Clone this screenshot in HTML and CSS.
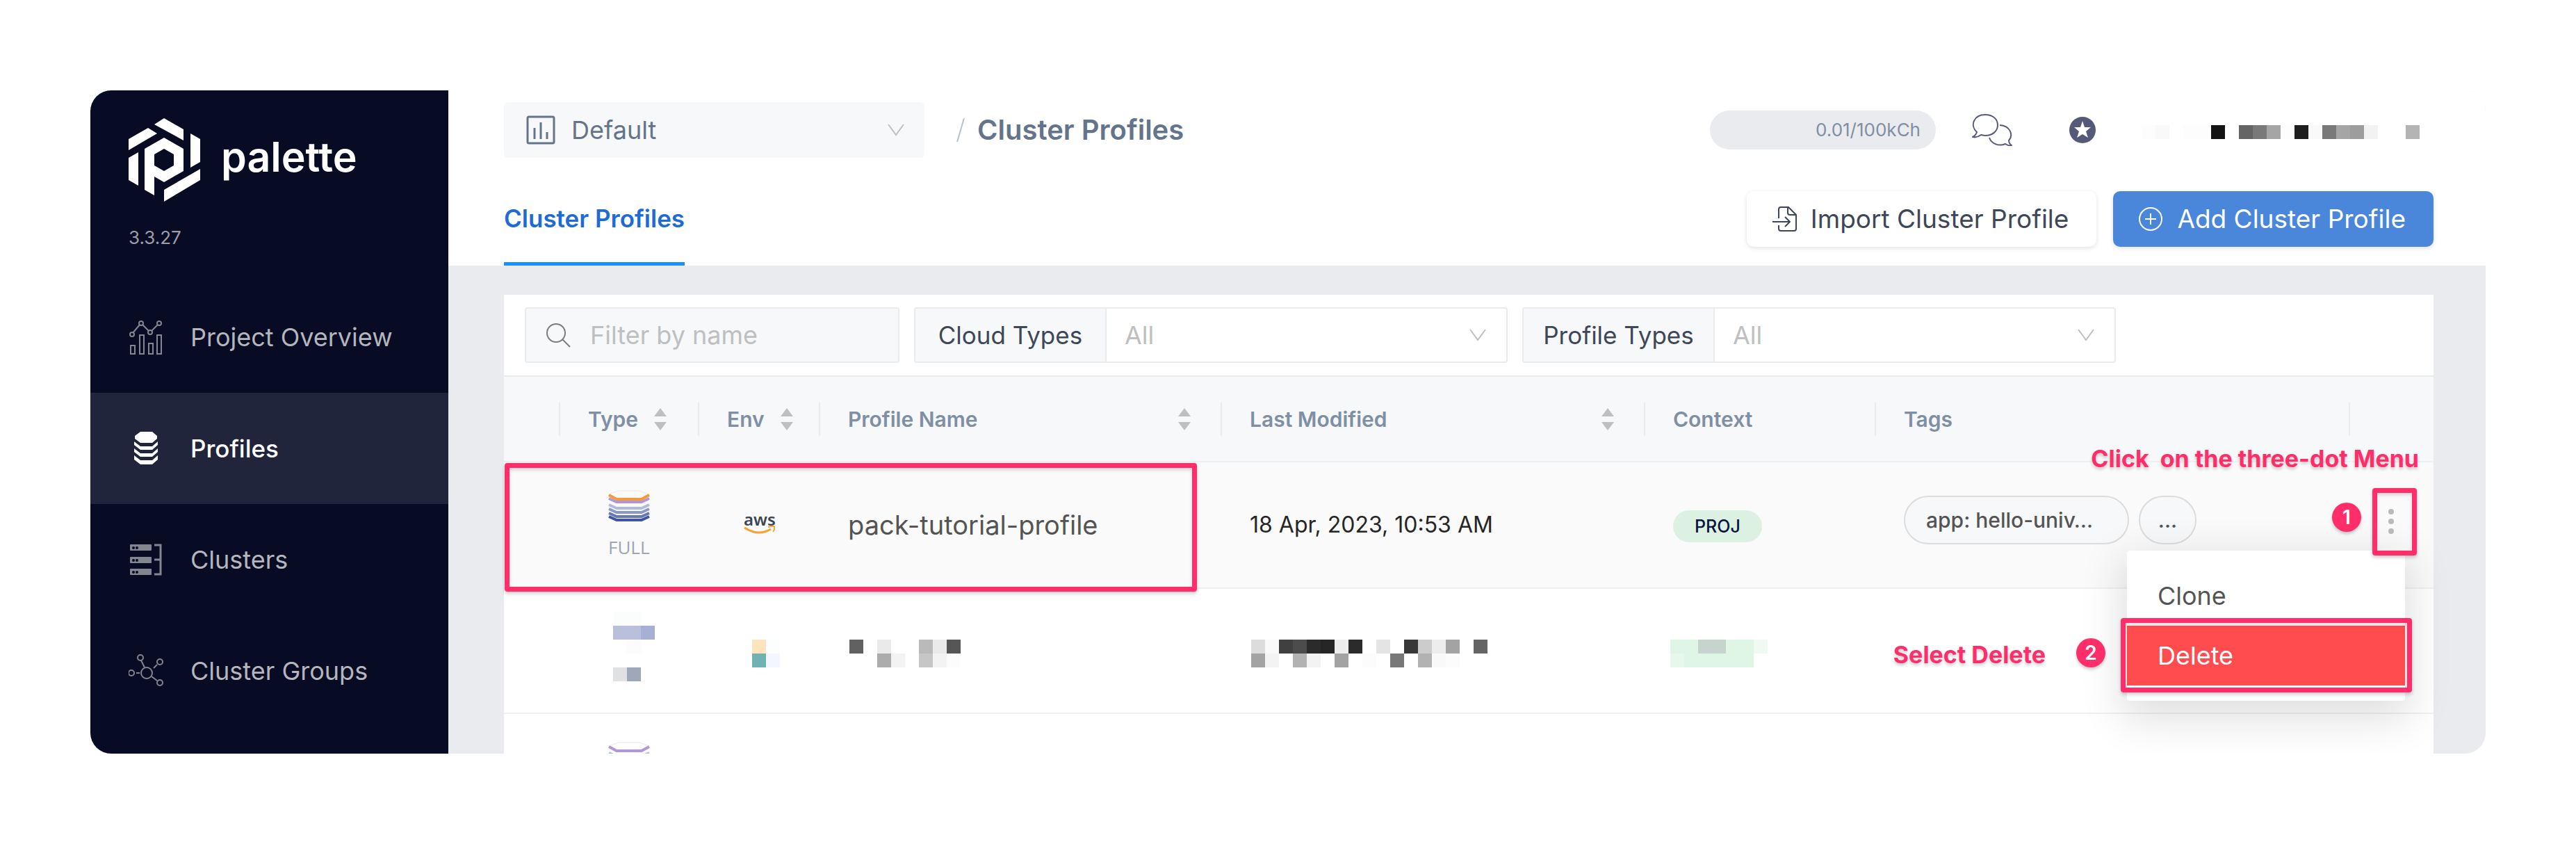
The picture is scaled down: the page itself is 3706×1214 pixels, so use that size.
FILE: index.html
```html
<!DOCTYPE html>
<html lang="en">
<head>
<meta charset="utf-8">
<title>Palette - Cluster Profiles</title>
<link rel="stylesheet" href="styles.css">
</head>
<body>
<svg class="defs" aria-hidden="true">
  <symbol id="chevron" viewBox="0 0 26 20"><path d="M2 2l11 15L24 2" fill="none" stroke="currentColor" stroke-width="2"/></symbol>
  <symbol id="sorter" viewBox="0 0 20 32"><path d="M10 0l9 12H1zM10 32l9-12H1z" fill="#bfbfbf"/></symbol>
</svg>
<div class="app">
  <aside class="sidebar">
    <a class="brand" href="#">
      <svg class="brand-mark" viewBox="0 0 103 120" fill="#fff" aria-hidden="true">
        <path d="M37 9L51 0l28 16v16zM0 30l28-16 13 8L0 46zM0 57l14-8v48L0 89zM89 22l14 8v33l-14 8zM51 103l52-30v16l-52 31z"/>
        <path fill-rule="evenodd" d="M23 44l28-16 28 16v32L51 92 37 84v27l-14-8zM37 52v16l14 8 14-8V52l-14-8z"/>
      </svg>
      <span>palette</span>
    </a>
    <div class="version">3.3.27</div>
    <nav class="nav">
      <a href="#"><svg viewBox="0 0 50 50" fill="none" stroke="currentColor" stroke-width="2"><path d="M3 37h6v12H3zM16 22h6v27h-6zM29 34h6v15h-6zM41 22h6v27h-6zM6 19L16 7M20 7l9 9M33 16l9-9"/><circle cx="5" cy="21" r="3"/><circle cx="18" cy="5" r="3"/><circle cx="31" cy="18" r="3"/><circle cx="44" cy="5" r="3"/></svg>Project Overview</a>
      <a class="active" href="#" aria-current="page"><svg viewBox="0 0 50 50" fill="currentColor"><path d="M17 1h17l7 6v4l-7 6H17l-8-6V7zM8 15l9 7h17l8-7v5l-8 7H17l-9-7zM8 25l9 7h17l8-7v5l-8 7H17l-9-7zM8 35l9 7h17l8-7v6l-8 7H17l-9-7z"/></svg>Profiles</a>
      <a href="#"><svg viewBox="0 0 50 50"><g fill="currentColor"><rect x="2" y="3" width="31" height="9" rx="1"/><rect x="2" y="21" width="31" height="9" rx="1"/><rect x="2" y="38" width="31" height="9" rx="1"/></g><path d="M37 4h9v42h-9M37 25h9" fill="none" stroke="currentColor" stroke-width="3"/><g fill="#070b24"><circle cx="7" cy="8" r="2"/><circle cx="12" cy="8" r="2"/><circle cx="7" cy="26" r="2"/><circle cx="12" cy="26" r="2"/><circle cx="7" cy="43" r="2"/><circle cx="12" cy="43" r="2"/></g></svg>Clusters</a>
      <a href="#"><svg viewBox="0 0 50 50" fill="none" stroke="currentColor" stroke-width="2"><circle cx="26" cy="28" r="8"/><circle cx="17" cy="6" r="4"/><circle cx="45" cy="12" r="4"/><circle cx="4" cy="28" r="4"/><circle cx="45" cy="42" r="4"/><path d="M18 10l5 10M33 33l8 6M36 21l5-5M11 28h5"/></svg>Cluster Groups</a>
    </nav>
  </aside>

  <main class="main">
    <header class="header">
      <div class="topbar">
        <label class="project">
          <svg viewBox="0 0 42 42" fill="none" stroke="currentColor"><rect x="2" y="2" width="38" height="38" rx="2" stroke-width="3"/><path d="M12 18v16M21 10v24M30 24v10" stroke-width="3"/></svg>
          <select aria-label="Project"><option>Default</option></select>
          <svg class="chevron"><use href="#chevron"/></svg>
        </label>
        <svg class="slash" viewBox="0 0 12 34"><path d="M11 0L1 34" stroke="#b8c0cc" stroke-width="2"/></svg>
        <h1>Cluster Profiles</h1>
        <div class="usage">0.01/100kCh</div>
        <svg class="chat" viewBox="0 0 58 46" fill="none" stroke="#555a7b" stroke-width="2" stroke-linejoin="round"><path d="M7 26C-3 17 2 1 19 1c13 0 18 8 18 15 0 9-8 15-18 15-3 0-5-1-6-1-4 3-8 4-12 3 4-2 5-4 6-7z"/><path d="M40 16c15 1 20 14 13 22 0 3 1 5 4 7-3 1-6 0-9-2-9 4-20 0-23-9"/></svg>
        <svg class="star" viewBox="0 0 38 38"><circle cx="19" cy="19" r="19" fill="#555a7b"/><path d="M19 6l3 9h9l-7 6 3 9-8-5-8 5 3-9-7-6h9z" fill="#fff"/></svg>
        <svg class="account" viewBox="0 0 420 20" shape-rendering="crispEdges" aria-label="Account"><path fill="#fdfdfd" d="M0 0h20v20H0zM60 0h40v20H60zM200 0h20v20h-20z"/><path fill="#f9f9f9" d="M20 0h20v20H20zM240 0h20v20h-20z"/><path fill="#141414" d="M100 0h20v20h-20z"/><path fill="#656565" d="M140 0h20v20h-20z"/><path fill="#797979" d="M160 0h20v20h-20zM260 0h20v20h-20z"/><path fill="#a5a5a5" d="M180 0h20v20h-20zM280 0h20v20h-20z"/><path fill="#1e1e1e" d="M220 0h20v20h-20z"/><path fill="#9d9d9d" d="M300 0h20v20h-20z"/><path fill="#f2f2f2" d="M320 0h20v20h-20z"/><path fill="#b4b4b4" d="M380 0h20v20h-20z"/></svg>
      </div>
      <div class="tabbar">
        <a class="tab" href="#">Cluster Profiles</a>
        <div class="actions">
          <button class="btn" type="button"><svg viewBox="0 0 36 36" fill="none" stroke="currentColor" stroke-width="2" stroke-linejoin="round"><path d="M10 17V4q0-3 3-3h11l11 11v20q0 3-3 3H13q-3 0-3-3v-5M23 1v8q0 3 3 3h9M1 22h25M19 15l7 7-7 7"/></svg>Import Cluster Profile</button>
          <button class="btn primary" type="button"><svg viewBox="0 0 36 36" fill="none" stroke="currentColor" stroke-width="2"><circle cx="18" cy="18" r="16"/><path d="M18 10v16M10 18h16"/></svg>Add Cluster Profile</button>
        </div>
      </div>
    </header>

    <section class="panel">
      <form class="filters">
        <label class="search">
          <svg viewBox="0 0 36 36" fill="none" stroke="#7c7c7c" stroke-width="2"><circle cx="15" cy="15" r="13"/><path d="M24 24l11 11"/></svg>
          <input type="text" aria-label="Filter by name" placeholder="Filter by name">
        </label>
        <label class="filter"><span>Cloud Types</span><select><option>All</option></select><svg class="chevron"><use href="#chevron"/></svg></label>
        <label class="filter"><span>Profile Types</span><select><option>All</option></select><svg class="chevron"><use href="#chevron"/></svg></label>
      </form>

      <table>
        <colgroup><col class="c-pad"><col class="c-type"><col class="c-env"><col class="c-name"><col class="c-date"><col class="c-context"><col><col class="c-menu"></colgroup>
        <thead>
          <tr>
            <th></th>
            <th><div>Type<svg class="sorter"><use href="#sorter"/></svg></div></th>
            <th><div>Env<svg class="sorter"><use href="#sorter"/></svg></div></th>
            <th class="wide"><div>Profile Name<svg class="sorter"><use href="#sorter"/></svg></div></th>
            <th class="wide"><div>Last Modified<svg class="sorter"><use href="#sorter"/></svg></div></th>
            <th><div>Context</div></th>
            <th><div>Tags</div></th>
            <th></th>
          </tr>
        </thead>
        <tbody>
          <tr class="hovered">
            <td></td>
            <td class="type">
              <svg viewBox="0 0 60 46"><path d="M1 6L15 1h30l14 5" fill="none" stroke="#e8e8e8"/><g fill="none" stroke-width="4"><path stroke="#b296dc" d="M1 12l11 5h36l11-5"/><path stroke="#f5993f" d="M1 7l11 6h36l11-6"/><path stroke="#b3bbdc" d="M1 21l11 5h36l11-5"/><path stroke="#8b99c9" d="M1 27l11 5h36l11-5"/><path stroke="#6577b4" d="M1 33l11 5h36l11-5"/><path stroke="#4054a0" d="M1 38l11 5h36l11-5"/></g></svg>
              FULL
            </td>
            <td><svg class="aws" viewBox="0 0 48 34"><text x="1" y="18">aws</text><path d="M2 21q20 13 38 2" fill="none" stroke="#f9a234" stroke-width="3"/><path d="M36 20q10-2 9 0 1 3-2 7" fill="none" stroke="#f9a234" stroke-width="2"/></svg></td>
            <td class="name">pack-tutorial-profile</td>
            <td class="date">18 Apr, 2023, 10:53 AM</td>
            <td><span class="badge">PROJ</span></td>
            <td><div class="tags"><span class="tag">app: hello-univ…</span><span class="tag">...</span></div></td>
            <td><button class="dots" type="button" aria-label="Row menu"><svg viewBox="0 0 10 38" fill="#bbb"><circle cx="5" cy="5" r="4"/><circle cx="5" cy="19" r="4"/><circle cx="5" cy="33" r="4"/></svg></button></td>
          </tr>
          <tr class="redacted">
            <td></td>
            <td class="r-type"><svg width="60" height="120" viewBox="0 0 60 120" shape-rendering="crispEdges"><path fill="#fbfdfc" d="M0 0h40v20H0z"/><path fill="#b9c0dc" d="M0 20h40v20H0z"/><path fill="#a6b0d4" d="M40 20h20v20H40z"/><path fill="#fcfcfc" d="M20 40h20v20H20z"/><path fill="#e0e1e3" d="M0 80h20v20H0z"/><path fill="#9fa8b8" d="M20 80h20v20H20z"/></svg></td>
            <td class="r-env"><svg width="40" height="40" viewBox="0 0 40 40" shape-rendering="crispEdges"><path fill="#fde4bc" d="M0 0h20v20H0z"/><path fill="#fcfdff" d="M20 0h20v20H20z"/><path fill="#70b2b2" d="M0 20h20v20H0z"/><path fill="#f3f6fe" d="M20 20h20v20H20z"/></svg></td>
            <td><svg width="160" height="40" viewBox="0 0 160 40" shape-rendering="crispEdges"><path fill="#616161" d="M0 0h20v20H0z"/><path fill="#eaeaea" d="M40 0h20v20H40zM120 0h20v20h-20z"/><path fill="#bababa" d="M100 0h20v20h-20z"/><path fill="#565656" d="M140 0h20v20h-20z"/><path fill="#acacac" d="M40 20h20v20H40z"/><path fill="#f3f3f3" d="M60 20h20v20H60zM120 20h20v20h-20z"/><path fill="#c6c6c6" d="M100 20h20v20h-20z"/><path fill="#fcfcfc" d="M140 20h20v20h-20z"/></svg></td>
            <td><svg width="340" height="40" viewBox="0 0 340 40" shape-rendering="crispEdges"><path fill="#dcdcdc" d="M0 0h20v20H0z"/><path fill="#f9f9f9" d="M20 0h20v20H20zM260 20h20v20h-20z"/><path fill="#404040" d="M40 0h20v20H40z"/><path fill="#4c4c4c" d="M60 0h20v20H60z"/><path fill="#2b2b2b" d="M80 0h20v20H80zM140 0h20v20h-20z"/><path fill="#262626" d="M100 0h20v20h-20z"/><path fill="#ededed" d="M120 0h20v20h-20zM260 0h20v20h-20z"/><path fill="#e4e4e4" d="M180 0h20v20h-20z"/><path fill="#383838" d="M220 0h20v20h-20z"/><path fill="#ccc" d="M240 0h20v20h-20z"/><path fill="#a3a3a3" d="M280 0h20v20h-20zM0 20h20v20H0zM120 20h20v20h-20z"/><path fill="#646464" d="M320 0h20v20h-20z"/><path fill="#f3f3f3" d="M20 20h20v20H20zM80 20h20v20H80z"/><path fill="#b2b2b2" d="M60 20h20v20H60zM240 20h20v20h-20z"/><path fill="#fcfcfc" d="M160 20h20v20h-20zM280 20h20v20h-20z"/><path fill="#787878" d="M200 20h20v20h-20z"/></svg></td>
            <td class="r-context"><svg width="140" height="40" viewBox="0 0 140 40" shape-rendering="crispEdges"><path fill="#dff5e6" d="M0 0h120v40H0z"/><path fill="#c5d5ce" d="M40 0h40v20H40z"/><path fill="#eefaf2" d="M120 0h20v20h-20z"/><path fill="#e6f8ec" d="M0 20h20v20H0z"/></svg></td>
            <td></td>
            <td></td>
          </tr>
          <tr>
            <td></td>
            <td class="type"><svg viewBox="0 0 60 46"><path d="M1 6L15 1h30l14 5" fill="none" stroke="#e8e8e8"/><g fill="none" stroke-width="4"><path stroke="#b296dc" d="M1 7l11 6h36l11-6"/><path stroke="#b3bbdc" d="M1 16l11 5h36l11-5"/></g></svg></td>
            <td></td><td></td><td></td><td></td><td></td><td></td>
          </tr>
        </tbody>
      </table>

      <div class="mark mark-row"></div>
      <div class="menu">
        <button type="button">Clone</button>
        <button class="danger" type="button">Delete</button>
      </div>
      <div class="mark mark-dots"></div>
      <div class="mark mark-delete"></div>
      <div class="note note-menu">Click  on the three-dot Menu</div>
      <div class="step step-1">1</div>
      <div class="note note-delete">Select Delete</div>
      <div class="step step-2">2</div>
    </section>
  </main>
</div>
</body>
</html>
```
FILE: styles.css
```css
* { box-sizing: border-box; }

body {
  margin: 0;
  padding: 130px;
  background: #fff;
  font-family: Inter, "Open Sans", sans-serif;
  font-size: 36px;
  line-height: 44px;
  color: #3d4757;
}

svg { display: block; flex: none; }
a { color: inherit; text-decoration: none; }
button, input, select { font: inherit; color: inherit; border: 0; background: none; padding: 0; margin: 0; }
select { appearance: none; opacity: 1; }
.defs { position: absolute; width: 0; height: 0; }

.app {
  display: flex;
  height: calc(100vh - 260px);
  border-radius: 30px;
  overflow: hidden;
}

/* Sidebar */
.sidebar { flex: none; width: 515px; background: #070b24; color: #b5b6bd; }
.brand { display: flex; align-items: center; gap: 30px; padding: 40px 55px 0; color: #fff; font-size: 59px; font-weight: 600; line-height: 60px; }
.brand span { padding-bottom: 8px; }
.brand-mark { width: 103px; height: 120px; }
.version { padding: 36px 55px 0; font-size: 26px; line-height: 32px; color: #9c9da7; }
.nav { padding-top: 47px; }
.nav a { display: flex; align-items: center; gap: 39px; height: 160px; padding-left: 55px; }
.nav svg { width: 50px; height: 50px; color: #83858f; }
.nav .active, .nav .active svg { color: #fff; }
.nav .active { background: #21253b; font-size: 35px; font-weight: 500; }

/* Header */
.main { flex: 1; min-width: 0; background: #e9ebee; }
.header { background: #fff; padding: 17px 75px 0 80px; }
.topbar { display: flex; align-items: center; height: 80px; }
.project { display: flex; align-items: center; gap: 23px; width: 605px; height: 80px; padding: 0 28px 0 32px; border-radius: 6px; background: #f6f8fa; color: #64748b; }
.project svg:first-child { width: 42px; height: 42px; }
.project select { flex: 1; height: 80px; }
.chevron { width: 26px; height: 20px; color: #bfbfbf; }
.slash { width: 12px; height: 34px; margin: 0 18px 0 46px; }
h1 { margin: 0; font-size: 40px; line-height: 48px; font-weight: 600; color: #64748b; }
.usage { width: 325px; height: 56px; margin-left: auto; padding-right: 22px; border-radius: 28px; background: #e9ebee; color: #7f8fa4; font-size: 26px; line-height: 56px; text-align: right; }
.chat { width: 58px; height: 46px; margin-left: 52px; }
.star { width: 38px; height: 38px; margin: 0 66px 0 82px; }
.account { width: 420px; height: 20px; margin-top: 6px; }
.tabbar { display: flex; justify-content: space-between; align-items: center; height: 155px; padding-top: 20px; }
.tab { height: 135px; border-bottom: 5px solid #1890ff; color: #1f6bd6; font-size: 35px; font-weight: 600; line-height: 135px; }
.actions { display: flex; gap: 24px; }
.btn { display: flex; align-items: center; gap: 20px; height: 80px; padding: 0 40px 0 36px; border-radius: 10px; background: #fff; font-size: 37px; box-shadow: 0 2px 6px rgba(0, 0, 0, .12); }
.btn svg { width: 36px; height: 36px; }
.btn.primary { background: #4a87db; color: #fff; }

/* Panel and filters */
.panel { position: relative; margin: 42px 75px 0 80px; background: #fff; }
.filters { display: flex; gap: 21px; padding: 18px 30px; border-bottom: 2px solid #e9ebee; }
.search, .filter { display: flex; align-items: center; height: 80px; border: 2px solid #e9ebee; border-radius: 4px; }
.search { gap: 28px; width: 539px; padding: 0 28px; background: #f6f8fa; }
.search svg { width: 36px; height: 36px; }
.search input { flex: 1; min-width: 0; height: 76px; outline: 0; }
.search input::placeholder { color: #bfbfbf; opacity: 1; }
.filter { width: 854px; padding-right: 28px; }
.filter span { width: 275px; height: 76px; border-right: 2px solid #e9ebee; background: #f6f8fa; font-size: 35px; line-height: 76px; text-align: center; }
.filter select { flex: 1; height: 76px; padding-left: 26px; color: #bfbfbf; }

/* Table */
table { width: 100%; table-layout: fixed; border-collapse: separate; border-spacing: 0; }
.c-pad { width: 79px; }
.c-type { width: 200px; }
.c-env { width: 174px; }
.c-name { width: 578px; }
.c-date { width: 609px; }
.c-context { width: 332px; }
.c-menu { width: 122px; }
th { height: 123px; padding: 0; border-bottom: 2px solid #f0f0f0; background: #f6f8fa; color: #7f8fa4; font-size: 30px; font-weight: 600; text-align: left; }
th div { display: flex; align-items: center; gap: 22px; height: 48px; padding-left: 40px; border-left: 2px solid #e9ebee; }
th:last-child { background: linear-gradient(#e9ebee, #e9ebee) left center / 2px 48px no-repeat #f6f8fa; }
th.wide div { justify-content: space-between; padding-right: 42px; }
.sorter { width: 20px; height: 32px; }
td { height: 182px; padding: 0 0 0 42px; border-bottom: 2px solid #f0f0f0; }
tr + tr td { height: 180px; }
.hovered td { background: #fafafa; }
.type { padding: 40px 0 0 71px; vertical-align: top; font: 26px/32px "Open Sans", sans-serif; color: #9aa5b5; }
.type svg { width: 60px; height: 46px; margin-bottom: 20px; }
.aws { width: 48px; height: 34px; margin-left: 23px; overflow: visible; }
.aws text { font: 600 24px "Noto Sans", sans-serif; fill: #3b4554; }
.name { font-size: 38px; color: #545454; }
.date { font-size: 32px; color: #262626; }
.badge { display: inline-block; height: 46px; padding: 0 31px; border-radius: 23px; background: #ddf1e3; color: #0a1340; font-size: 25px; font-weight: 500; line-height: 46px; }
.tags { display: flex; gap: 14px; margin-top: -14px; }
.tag { width: 324px; height: 70px; padding: 0 30px; border: 2px solid #dcdcdc; border-radius: 35px; background: #f6f8fa; color: #545454; font-size: 30px; font-weight: 500; line-height: 66px; white-space: nowrap; }
.tag + .tag { width: 83px; padding: 0; text-align: center; }
.dots { display: block; width: 38px; height: 60px; padding: 11px 14px; }
.dots svg { width: 10px; height: 38px; }
.hovered td:last-child { padding: 0 0 10px 42px; }

/* Pixelated cells of the hidden profile */
.redacted td { padding-top: 73px; padding-left: 44px; vertical-align: top; }
.redacted .r-type { padding-top: 33px; padding-left: 78px; }
.redacted .r-env { padding-left: 78px; }
.redacted .r-context { padding-left: 38px; }

/* Row menu */
.menu { position: absolute; top: 368px; right: 41px; width: 400px; padding: 22px 0; border-radius: 4px; background: #fff; box-shadow: 0 18px 60px 8px rgba(0, 0, 0, .13); }
.menu button { display: block; width: 100%; height: 86px; padding-left: 44px; text-align: left; color: #545454; }
.menu .danger { background: #ff4d4f; color: #fff; }

/* Guide marks over the page */
.mark { position: absolute; border: 7px solid #ff2e6b; border-radius: 4px; box-shadow: 0 3px 5px rgba(0, 0, 0, .2), inset 0 3px 5px rgba(0, 0, 0, .15); }
.mark-row { left: 1px; top: 242px; width: 996px; height: 185px; }
.mark-dots { right: 24px; top: 278px; width: 64px; height: 97px; }
.mark-delete { right: 31px; top: 465px; width: 419px; height: 107px; }
.note { position: absolute; color: #ff2e6b; font-size: 34px; font-weight: 700; line-height: 40px; white-space: pre; text-shadow: 0 3px 4px rgba(0, 0, 0, .2); }
.note-menu { right: 21px; top: 216px; }
.note-delete { right: 558px; top: 498px; }
.step { position: absolute; width: 42px; height: 42px; border-radius: 50%; background: #ff2e6b; color: #fff; font-size: 28px; font-weight: 600; line-height: 42px; text-align: center; box-shadow: 0 3px 4px rgba(0, 0, 0, .2); }
.step-1 { right: 104px; top: 299px; }
.step-2 { right: 472px; top: 494px; }
```
